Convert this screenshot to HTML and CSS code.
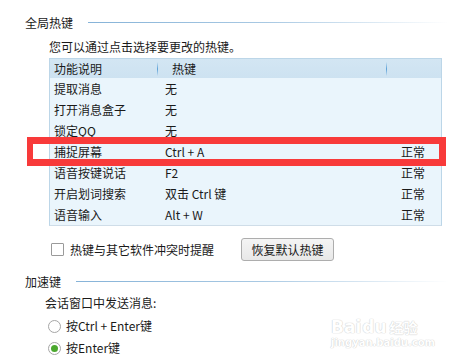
FILE: index.html
```html
<!DOCTYPE html>
<html lang="zh-CN">
<head>
<meta charset="utf-8">
<link rel="stylesheet" href="styles.css">
</head>
<body>
<div class="page">
  <div class="group-title first"><span>全局热键</span><i class="rule"></i></div>
  <div class="desc">您可以通过点击选择要更改的热键。</div>
  <div class="table">
    <div class="row head">
      <div class="c1">功能说明</div>
      <div class="c2"><b class="sep"></b><span class="hk">热键</span></div>
      <div class="c3"><b class="sep"></b></div>
    </div>
    <div class="row"><div class="c1">提取消息</div><div class="c2">无</div><div class="c3"></div></div>
    <div class="row"><div class="c1">打开消息盒子</div><div class="c2">无</div><div class="c3"></div></div>
    <div class="row"><div class="c1">锁定QQ</div><div class="c2">无</div><div class="c3"></div></div>
    <div class="row"><div class="c1">捕捉屏幕</div><div class="c2">Ctrl + A</div><div class="c3">正常</div></div>
    <div class="row"><div class="c1">语音按键说话</div><div class="c2">F2</div><div class="c3">正常</div></div>
    <div class="row"><div class="c1">开启划词搜索</div><div class="c2">双击 Ctrl 键</div><div class="c3">正常</div></div>
    <div class="row"><div class="c1">语音输入</div><div class="c2">Alt + W</div><div class="c3">正常</div></div>
  </div>
  <div class="options">
    <label class="check"><span class="box"></span>热键与其它软件冲突时提醒</label>
    <button class="btn">恢复默认热键</button>
  </div>
  <div class="group-title second"><span>加速键</span><i class="rule"></i></div>
  <div class="sub">会话窗口中发送消息:</div>
  <div class="radio r1"><span class="dot"></span>按Ctrl + Enter键</div>
  <div class="radio r2"><span class="dot on"></span>按Enter键</div>
  <div class="highlight"></div>
  <div class="watermark">
    <div class="wm-top"><span class="wm-bai">Bai</span><span class="wm-paw">du</span><span class="wm-jy">经验</span></div>
    <div class="wm-url">jingyan.baidu.com</div>
  </div>
</div>
</body>
</html>
```
FILE: styles.css
```css
html, body {
  margin: 0;
  padding: 0;
  background: #ffffff;
}
.page {
  position: relative;
  width: 449px;
  height: 361px;
  overflow: hidden;
  font-family: "Noto Sans CJK SC", "Microsoft YaHei", sans-serif;
  font-size: 12px;
  color: #1a1a1a;
}
.group-title {
  display: flex;
  align-items: center;
  height: 16px;
  line-height: 16px;
  padding-left: 25px;
}
.group-title.first { margin-top: 15px; }
.group-title.second { margin-top: 13px; }
.group-title .rule {
  flex: 1;
  height: 1px;
  margin-left: 15px;
  margin-top: -1px;
  background: linear-gradient(to right, #86b3d8 0%, #a9c9e3 50%, #ffffff 100%);
}
.desc {
  margin: 8px 0 0 49px;
  height: 16px;
  line-height: 16px;
}
.table {
  margin: 3px 0 0 49px;
  width: 393px;
  box-sizing: border-box;
  border: 1px solid #bcd6e8;
  border-bottom-color: #cfdde8;
  background: #eaf5fc;
}
.row {
  display: grid;
  grid-template-columns: 107px 229px 55px;
  height: 21px;
  line-height: 21px;
}
.row.head {
  height: 19px;
  line-height: 19px;
  background: linear-gradient(to bottom, #d3e6f3 0%, #cde2f1 100%);
}
.c1 { padding-left: 4px; white-space: nowrap; }
.c2 { padding-left: 8px; position: relative; white-space: nowrap; }
.c3 { padding-left: 15px; position: relative; white-space: nowrap; }
.head .c2 { padding-left: 15px; }
.sep {
  position: absolute;
  left: 0;
  top: 3px;
  width: 1px;
  height: 14px;
  background: linear-gradient(to bottom, rgba(90,160,215,0) 0%, #5aa0d7 50%, rgba(90,160,215,0) 100%);
}
.options {
  display: flex;
  align-items: center;
  margin-top: 12px;
  height: 23px;
}
.check {
  display: flex;
  align-items: center;
  margin-left: 51px;
}
.box {
  width: 11px;
  height: 11px;
  border: 1px solid #9a9a9a;
  border-radius: 1px;
  background: #fff;
  margin-right: 6px;
}
.btn {
  margin-left: 27px;
  width: 93px;
  height: 23px;
  padding: 0;
  border: 1px solid #adadad;
  border-radius: 3px;
  background: linear-gradient(to bottom, #f4f4f4 0%, #e8e8e8 100%);
  font-family: "Noto Sans CJK SC", "Microsoft YaHei", sans-serif;
  font-size: 12px;
  color: #1a1a1a;
}
.sub {
  margin: 5px 0 0 45px;
  height: 16px;
  line-height: 16px;
}
.radio {
  display: flex;
  align-items: center;
  margin-left: 48px;
  height: 16px;
  line-height: 16px;
}
.radio.r1 { margin-top: 7px; }
.radio.r2 { margin-top: 6px; }
.dot {
  width: 11px;
  height: 11px;
  border: 1px solid #a6a6a6;
  border-radius: 50%;
  background: #fff;
  margin-right: 5px;
  display: flex;
  align-items: center;
  justify-content: center;
}
.dot.on::after {
  content: "";
  width: 7px;
  height: 7px;
  border-radius: 50%;
  background: #4ba82e;
}
.highlight {
  position: absolute;
  left: 27px;
  top: 137px;
  width: 419px;
  height: 29px;
  box-sizing: border-box;
  border: 7px solid #f83a3a;
  border-left-width: 6px;
}
.watermark {
  position: absolute;
  left: 331px;
  top: 305px;
  width: 100px;
  font-family: "DejaVu Sans", sans-serif;
  color: #ffffff;
  opacity: 0.9;
}
.wm-top {
  display: flex;
  align-items: flex-end;
  height: 32px;
}
.wm-bai, .wm-paw {
  font-size: 17px;
  font-weight: bold;
  text-shadow: 0 0 1px #c8c8c8, 0 0 1px #c8c8c8;
}
.wm-paw { margin-left: 1px; }
.wm-jy {
  font-family: "Noto Sans CJK SC", sans-serif;
  font-size: 14px;
  font-weight: bold;
  margin-left: 3px;
  text-shadow: 0 0 1px #c8c8c8, 0 0 1px #c8c8c8;
}
.wm-url {
  font-size: 10px;
  font-weight: bold;
  line-height: 12px;
  text-shadow: 0 0 1px #c8c8c8, 0 0 1px #c8c8c8;
}
```
